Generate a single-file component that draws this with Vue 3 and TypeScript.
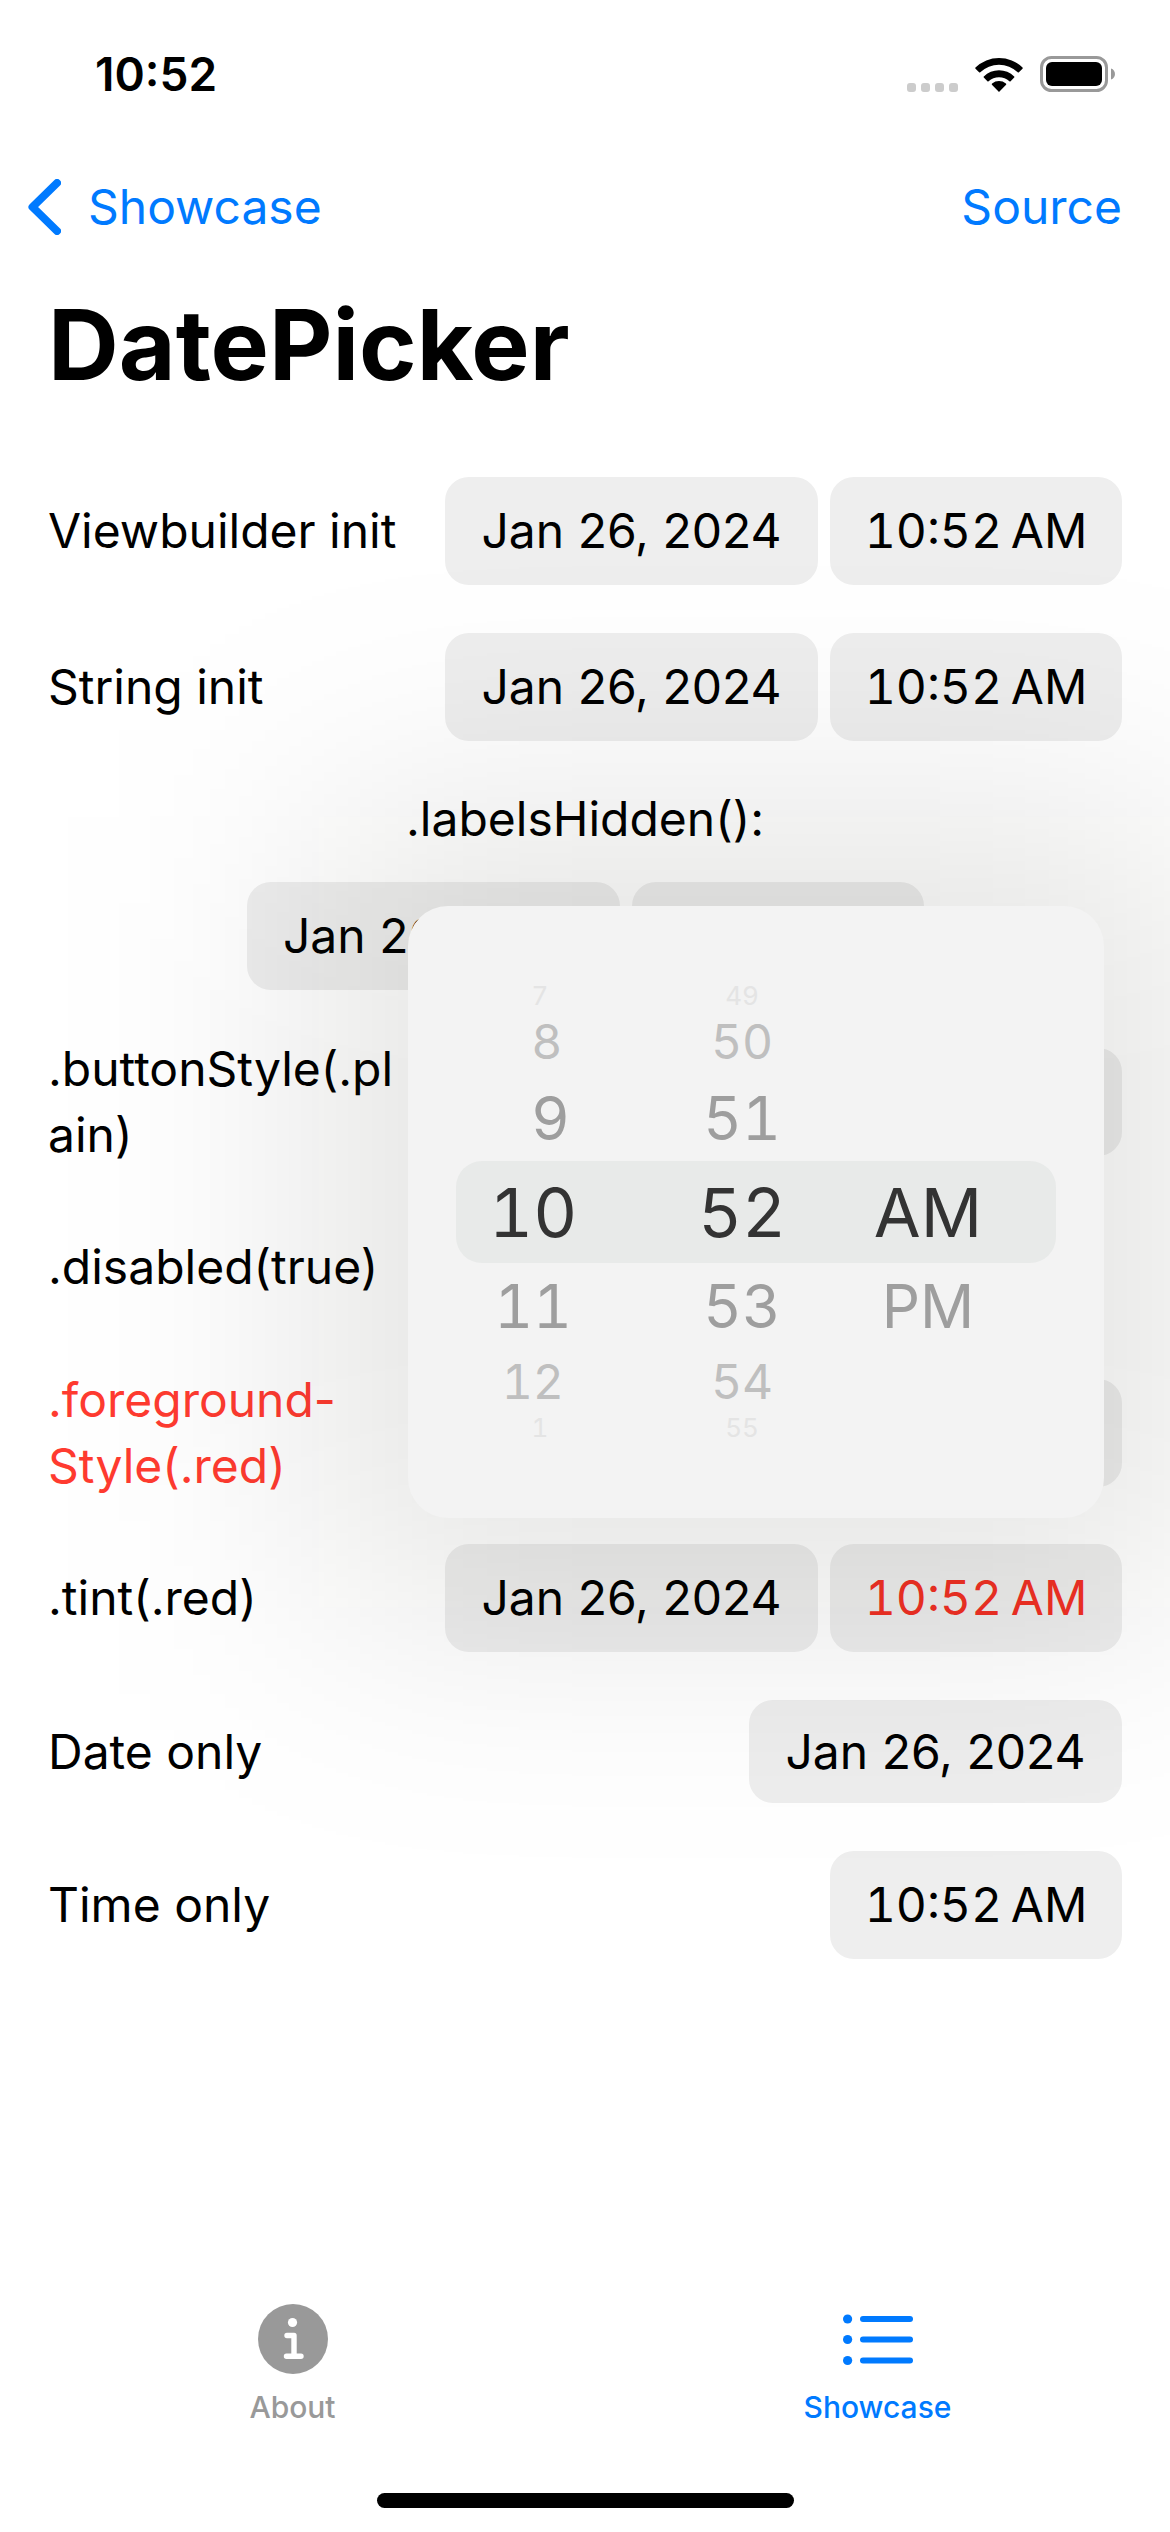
<script setup lang="ts">
interface Row {
  id: string
  label: string[]
  date?: boolean
  time?: boolean
  disabled?: boolean
  red?: boolean
  tint?: boolean
}

interface WheelRow {
  level: 'edge' | 'far' | 'near' | 'selected'
  hour: string
  minute: string
  period: string
}

const dateText = 'Jan 26, 2024'
const timeText = '10:52\u202fAM'

const firstRows: Row[] = [
  { id: 'viewbuilder', label: ['Viewbuilder init'], date: true, time: true },
  { id: 'string', label: ['String init'], date: true, time: true },
]

const lastRows: Row[] = [
  { id: 'plain', label: ['.buttonStyle(.pl', 'ain)'], date: true, time: true },
  { id: 'disabled', label: ['.disabled(true)'], date: true, time: true, disabled: true },
  { id: 'foreground', label: ['.foreground-', 'Style(.red)'], date: true, time: true, red: true },
  { id: 'tint', label: ['.tint(.red)'], date: true, time: true, tint: true },
  { id: 'date-only', label: ['Date only'], date: true },
  { id: 'time-only', label: ['Time only'], time: true },
]

const wheel: WheelRow[] = [
  { level: 'edge', hour: '7', minute: '49', period: '' },
  { level: 'far', hour: '8', minute: '50', period: '' },
  { level: 'near', hour: '9', minute: '51', period: '' },
  { level: 'selected', hour: '10', minute: '52', period: 'AM' },
  { level: 'near', hour: '11', minute: '53', period: 'PM' },
  { level: 'far', hour: '12', minute: '54', period: '' },
  { level: 'edge', hour: '1', minute: '55', period: '' },
]
</script>

<template>
  <div class="page">
    <header>
      <div class="status">
        <span class="clock">10:52</span>
        <div class="status-icons">
          <svg width="51" height="36" viewBox="0 0 51 36" fill="#ccc" aria-hidden="true">
            <rect x="0" y="27" width="9" height="9" rx="3" />
            <rect x="14" y="27" width="9" height="9" rx="3" />
            <rect x="28" y="27" width="9" height="9" rx="3" />
            <rect x="42" y="27" width="9" height="9" rx="3" />
          </svg>
          <svg width="48" height="36" viewBox="0 0 48 36" aria-hidden="true">
            <path d="M24 36 L16.9 28.7 Q16.4 28 17.1 27.5 A10.8 10.8 0 0 1 30.9 27.5 Q31.6 28 31.1 28.7 Z" />
            <path d="M8.8 20.4 A21.6 21.6 0 0 1 39.2 20.4 Q39.8 21 39.2 21.6 L35.6 25.2 Q35 25.7 34.4 25.2 A15.4 15.4 0 0 0 13.6 25.2 Q13 25.7 12.4 25.2 L8.8 21.6 Q8.2 21 8.8 20.4 Z" />
            <path d="M0.5 11.5 A33.6 33.6 0 0 1 47.5 11.5 Q48.1 12.1 47.5 12.7 L43.9 16.2 Q43.3 16.7 42.7 16.2 A27 27 0 0 0 5.3 16.2 Q4.7 16.7 4.1 16.2 L0.5 12.7 Q-0.1 12.1 0.5 11.5 Z" />
          </svg>
          <svg width="75" height="36" viewBox="0 0 75 36" aria-hidden="true">
            <rect x="1.5" y="1.5" width="65" height="33" rx="10" fill="none" stroke="#999" stroke-width="3" />
            <rect x="6" y="6" width="56" height="24" rx="6" />
            <path d="M71 12.5 C76.3 14 76.3 22 71 23.5 Z" fill="#999" />
          </svg>
        </div>
      </div>
      <nav class="nav">
        <a class="back" href="#showcase">
          <svg width="33" height="56" viewBox="0 0 33 56" aria-hidden="true">
            <path d="M29 4 L4.5 28 L29 52" fill="none" stroke="currentColor" stroke-width="8" stroke-linecap="round" stroke-linejoin="round" />
          </svg>
          <span>Showcase</span>
        </a>
        <a href="#source">Source</a>
      </nav>
      <h1>DatePicker</h1>
    </header>

    <main>
      <div v-for="row in firstRows" :key="row.id" class="row" role="group" :aria-labelledby="row.id">
        <span :id="row.id" class="label">{{ row.label[0] }}</span>
        <button type="button" class="chip date">{{ dateText }}</button>
        <button type="button" class="chip time">{{ timeText }}</button>
      </div>

      <div class="stacked" role="group" aria-labelledby="labels-hidden">
        <span id="labels-hidden">.labelsHidden():</span>
        <div class="pair">
          <button type="button" class="chip date">{{ dateText }}</button>
          <button type="button" class="chip time" aria-expanded="true">{{ timeText }}</button>
        </div>
      </div>

      <div
        v-for="row in lastRows"
        :key="row.id"
        class="row"
        :class="{ double: row.label.length > 1, red: row.red, tint: row.tint, single: !row.time }"
        role="group"
        :aria-labelledby="row.id"
      >
        <span :id="row.id" class="label"><template v-for="(part, i) in row.label" :key="i"><wbr v-if="i > 0">{{ part }}</template></span>
        <button v-if="row.date" type="button" class="chip date" :disabled="row.disabled">{{ dateText }}</button>
        <button v-if="row.time" type="button" class="chip time" :disabled="row.disabled">{{ timeText }}</button>
      </div>

      <div class="popover" role="dialog" aria-label="Time">
        <div class="wheel">
          <div v-for="(item, i) in wheel" :key="i" class="wheel-row" :class="item.level">
            <span><span class="digits">{{ item.hour }}</span></span>
            <span>{{ item.minute }}</span>
            <span>{{ item.period }}</span>
          </div>
        </div>
      </div>
    </main>

    <footer>
      <nav class="tabs">
        <a class="tab" href="#about">
          <svg width="70" height="70" viewBox="0 0 70 70" aria-hidden="true">
            <circle cx="35" cy="35" r="35" fill="currentColor" />
            <circle cx="34.5" cy="18.5" r="4.6" fill="#fff" />
            <path d="M29 31.5 H36 V52 M28.5 52.2 H43" fill="none" stroke="#fff" stroke-width="5.4" stroke-linecap="round" stroke-linejoin="round" />
          </svg>
          <span>About</span>
        </a>
        <a class="tab active" href="#showcase" aria-current="page">
          <svg width="70" height="70" viewBox="0 0 70 70" fill="currentColor" aria-hidden="true">
            <circle cx="4.6" cy="15" r="4.6" />
            <circle cx="4.6" cy="35.5" r="4.6" />
            <circle cx="4.6" cy="56.5" r="4.6" />
            <rect x="17" y="12" width="53" height="6" rx="3" />
            <rect x="17" y="32.5" width="53" height="6" rx="3" />
            <rect x="17" y="53.5" width="53" height="6" rx="3" />
          </svg>
          <span>Showcase</span>
        </a>
      </nav>
      <div class="home"></div>
    </footer>
  </div>
</template>

<style>
body {
  margin: 0;
  background: #fff;
}
</style>

<style scoped>
.page {
  display: flex;
  flex-direction: column;
  min-height: 100vh;
  overflow: hidden;
  background: #fff;
  color: #000;
  font-family: Inter, "Liberation Sans", sans-serif;
  font-size: 48px;
  line-height: 66px;
}

a {
  color: #007aff;
  text-decoration: none;
}

.status {
  display: flex;
  align-items: center;
  justify-content: space-between;
  height: 60px;
  padding: 44px 55px 0 95px;
}

.clock {
  font-size: 46px;
  font-weight: 600;
}

.status-icons {
  display: flex;
  gap: 17px;
}

.nav {
  display: flex;
  align-items: center;
  justify-content: space-between;
  height: 132px;
  margin-top: 37px;
  padding: 0 48px 0 28px;
}

.back {
  display: flex;
  align-items: center;
  gap: 27px;
}

h1 {
  margin: 12px 48px 0;
  font-size: 98px;
  font-weight: 700;
  line-height: 120px;
}

main {
  position: relative;
  display: flex;
  flex-direction: column;
  flex: 1;
  gap: 48px;
  padding: 72px 48px 48px;
}

.row {
  display: flex;
  align-items: center;
  gap: 12px;
}

.label {
  flex: 1;
  min-width: 0;
}

.double {
  height: 127px;
}

.red .label {
  color: #ff3b30;
}

.chip {
  flex: none;
  height: 108px;
  padding: 0;
  border: 0;
  border-radius: 24px;
  background: #eee;
  color: #000;
  font: inherit;
}

.date {
  width: 373px;
}

.time {
  width: 292px;
  font-variant-numeric: tabular-nums;
}

.single .chip {
  height: 103px;
}

.chip:disabled {
  background: none;
  color: #aaa;
}

.tint .time {
  color: #f23024;
}

.stacked {
  display: flex;
  flex-direction: column;
  align-items: center;
  gap: 33px;
  line-height: 60px;
}

.pair {
  display: flex;
  gap: 12px;
}

.popover {
  position: absolute;
  z-index: 1;
  top: 501px;
  right: 66px;
  width: 696px;
}

/* Wide soft shadow that falls over the rows behind the popover */
.popover::before {
  content: "";
  position: absolute;
  z-index: -1;
  inset: -90px;
  background: rgba(10, 10, 0, 0.11);
  filter: blur(130px);
  pointer-events: none;
}

.wheel {
  display: flex;
  flex-direction: column;
  justify-content: center;
  box-sizing: border-box;
  height: 612px;
  padding: 0 48px;
  border-radius: 40px;
  background: #f3f3f3;
  font-variant-numeric: tabular-nums;
}

.wheel-row {
  display: grid;
  grid-template-columns: 152px 268px 104px;
  align-items: center;
  line-height: 1;
  white-space: nowrap;
}

.wheel-row > span {
  display: flex;
  justify-content: center;
}

.digits {
  width: 2ch;
  text-align: right;
}

.selected {
  height: 102px;
  border-radius: 26px;
  background: #e8eae9;
  color: #333;
  font-size: 68px;
}

.near {
  height: 86px;
  color: #9e9e9e;
  font-size: 60px;
}

.far {
  height: 66px;
  color: #bfbfbf;
  font-size: 48px;
}

.edge {
  height: 26px;
  color: #e4e4e4;
  font-size: 26px;
}

.tabs {
  display: flex;
}

.tab {
  display: flex;
  flex: 1;
  flex-direction: column;
  align-items: center;
  gap: 15px;
  color: #999;
  font-size: 30px;
  font-weight: 500;
  line-height: 36px;
}

.active {
  color: #007aff;
}

.home {
  width: 417px;
  height: 15px;
  margin: 68px auto 24px;
  border-radius: 8px;
  background: #000;
}
</style>
